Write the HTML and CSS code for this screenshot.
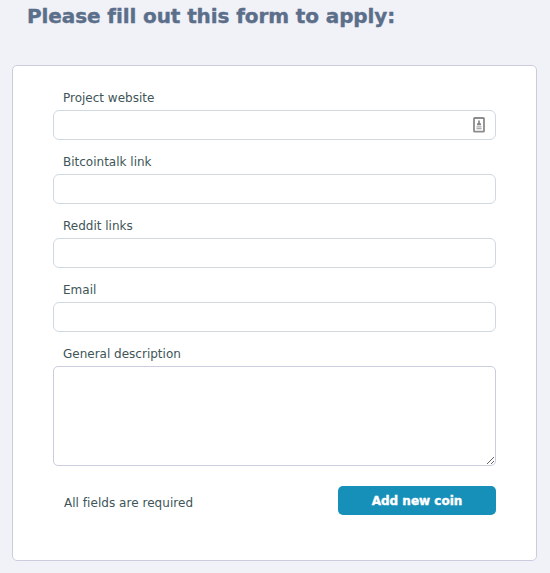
FILE: index.html
```html
<!DOCTYPE html>
<html lang="en">
  <head>
    <meta charset="UTF-8" />
    <meta name="viewport" content="width=device-width, initial-scale=1.0" />
    <title>Add new coin</title>
    <link rel="stylesheet" href="styles.css">
  </head>
  <body>
    <h1>Please fill out this form to apply:</h1>

    <form class="apply-form">
      <div class="field">
        <label for="website">Project website</label>
        <div class="input-wrap">
          <input type="text" id="website" name="website" />
          <svg class="autofill-icon" width="12" height="16" viewBox="0 0 12 16">
            <rect x="1" y="1" width="10" height="13.6" rx="0.6" fill="#fff" stroke="#8c8c8c" stroke-width="1.8" />
            <path d="M5.2 3.6h1.6v2.2l1.2 1v1.4H4V6.8l1.2-1z" fill="#858585" />
            <path d="M3.5 9.8h5M3.5 11.7h5" stroke="#aaa" stroke-width="1.2" />
          </svg>
        </div>
      </div>
      <div class="field">
        <label for="bitcointalk">Bitcointalk link</label>
        <input type="text" id="bitcointalk" name="bitcointalk" />
      </div>
      <div class="field">
        <label for="reddit">Reddit links</label>
        <input type="text" id="reddit" name="reddit" />
      </div>
      <div class="field">
        <label for="email">Email</label>
        <input type="text" id="email" name="email" />
      </div>
      <div class="field">
        <label for="description">General description</label>
        <textarea id="description" name="description"></textarea>
      </div>
      <div class="form-footer">
        <span class="note">All fields are required</span>
        <button type="submit" class="submit-btn">Add new coin</button>
      </div>
    </form>
  </body>
</html>
```

FILE: styles.css
```css
* {
  box-sizing: border-box;
}

body {
  margin: 0;
  background-color: #f1f2f8;
  color: #405557;
  font-family: Verdana, "DejaVu Sans", sans-serif;
  font-size: 12px;
  overflow: hidden;
}

h1 {
  margin: 3px 0 36px 27px;
  font-size: 20px;
  letter-spacing: -0.1px;
  line-height: 26px;
  color: #5b6e8a;
  -webkit-text-stroke: 0.4px #5b6e8a;
  white-space: nowrap;
}

.apply-form {
  width: 525px;
  height: 496px;
  margin-left: 12px;
  padding: 22px 40px 0;
  background-color: #fff;
  border: 1px solid #cbcddf;
  border-radius: 5px;
}

.field {
  margin-bottom: 12px;
}

.field label {
  display: block;
  height: 22px;
  padding-left: 10px;
  line-height: 20px;
}

.field input,
.field textarea {
  display: block;
  width: 100%;
  padding: 5px 10px;
  background-color: #fff;
  border: 1px solid #cfd9df;
  border-radius: 6px;
  font: inherit;
}

.field input {
  height: 30px;
}

.field textarea {
  height: 100px;
  border-color: #cbcddf;
  border-radius: 5px;
  resize: both;
}

.input-wrap {
  position: relative;
}

.autofill-icon {
  position: absolute;
  top: 7px;
  right: 11px;
}

.form-footer {
  display: flex;
  justify-content: space-between;
  margin-top: 20px;
}

.note {
  padding-left: 11px;
  line-height: 35px;
  letter-spacing: 0.04px;
}

.submit-btn {
  width: 158px;
  height: 29px;
  padding: 0;
  border: none;
  border-radius: 5px;
  background-color: #168fb9;
  color: #fff;
  font: bold 12px Verdana, "DejaVu Sans", sans-serif;
  -webkit-text-stroke: 0.4px #fff;
  cursor: pointer;
}
```
